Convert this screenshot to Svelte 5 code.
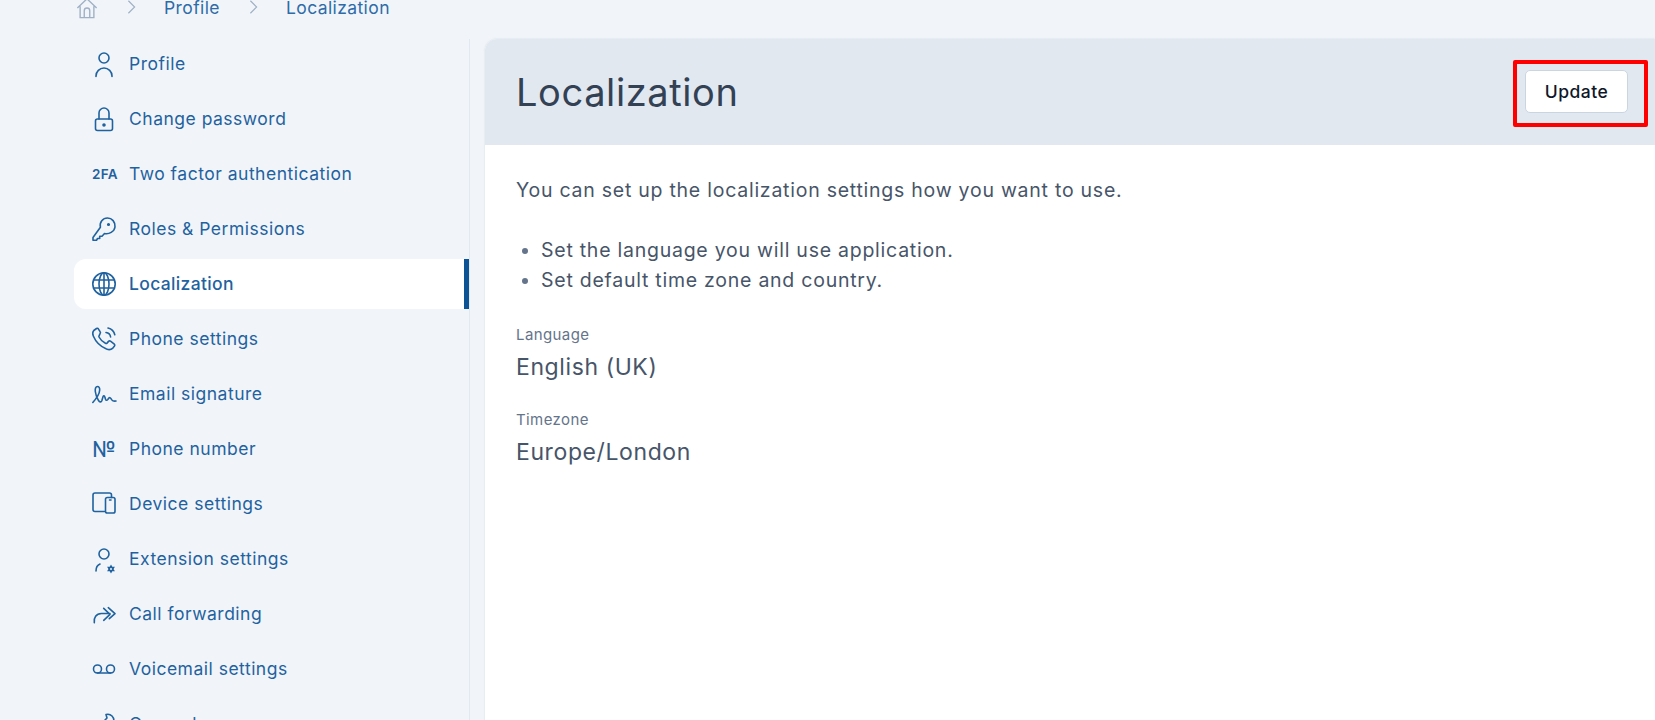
<script lang="ts">
	const items = [
		{ label: 'Profile', svg: '<circle cx="12" cy="6" r="5"/><path d="M4 24.500V24a8 8 0 0 1 16 0v.5"/>' },
		{ label: 'Change password', svg: '<rect x="3.500" y="12" width="17" height="11.500" rx="2"/><path d="M7 12V6a5 5 0 0 1 10 0v6"/><circle cx="12" cy="18" r="1" fill="currentColor"/>' },
		{ label: 'Two factor authentication', text: '2FA', cls: 'tfa' },
		{ label: 'Roles & Permissions', svg: '<path d="M1 20.500v2.800h3.500l1-1.800h2.200v-2.300H10l2.500-2.700c4.400 1 9.900-1.700 10.500-6.500C23.500 5 20 1 15.500 1 10.800 1 7.300 5.200 8.400 10.200z"/><circle cx="16.500" cy="7.500" r=".8" fill="currentColor"/>' },
		{ label: 'Localization', svg: '<circle cx="12" cy="12" r="11.200"/><ellipse cx="12" cy="12" rx="5" ry="11.200"/><path d="M12 .8v22.400M1.500 8h21M1.500 16h21"/>' },
		{ label: 'Phone settings', svg: '<path d="M4.500 1.500 1.800 3.500C.5 5 .5 7 1.300 9c2.500 6 7 10.500 13.200 13 2.200.8 4.500.8 6-.6l2-2.300c.5-.7.400-1.400-.2-1.900l-3.800-3c-.7-.5-1.400-.4-2 .2l-1.500 1.700c-.5.500-1 .5-1.600.2-2.800-1.400-5-3.600-6.400-6.300-.3-.6-.2-1.100.3-1.600L8 6.700c.6-.6.600-1.300.1-2L6.300 1.800c-.5-.7-1.100-.8-1.800-.3zM14 5.500c2.500.3 4.300 2 4.600 4.500M16 1c3.500.8 6 3.300 6.800 6.800"/>' },
		{ label: 'Email signature', svg: '<path d="M.8 20.500c2.500-2.800 6.700-8.500 6.900-12.500.1-2.300-.9-3.500-2.200-3.500C3.700 4.500 3 6.500 3.300 9.500c.4 3.500 1.700 6.700 3.200 9 1 1.500 2.700 2 3.300.2l1.200-4c.5-1.300 1.500-1.200 1.800 0l.7 2.500c.5 1.500 1.500 1.300 2.300.3l.9-1.200c.7-.9 1.500-.8 2.100.1l1 1.500c.8 1.100 2 1.400 4.200 1.100"/>' },
		{ label: 'Phone number', text: '№', cls: 'no' },
		{ label: 'Device settings', svg: '<path d="M12.500 19.500H3a2 2 0 0 1-2-2V3a2 2 0 0 1 2-2h14.500a2 2 0 0 1 2 2v2.500"/><rect x="13.500" y="5.500" width="9.500" height="15.500" rx="1.800"/><path d="M17.500 8h1.500"/>' },
		{ label: 'Extension settings', svg: '<circle cx="12" cy="7" r="5"/><path d="M4 24c0-3.500 1.500-6 4-7"/><path d="M19 17.500l3.900 6.750h-7.800zM19 26.500l-3.900-6.750h7.800z" fill="currentColor" stroke="none"/><circle cx="19" cy="22" r="1" fill="#f1f5f9" stroke="none"/>' },
		{ label: 'Call forwarding', svg: '<path d="M2.300 20.700c-.8-5 2-9 7-9.200h8.700M11.700 6.300 18 12.300l-6.300 6M16.300 5.700 23 11.700l-5.700 5"/>' },
		{ label: 'Voicemail settings', svg: '<circle cx="5.500" cy="12" r="4"/><circle cx="18.500" cy="12" r="4"/><path d="M5.500 16h13"/>' },
		{ label: 'General', svg: '<path d="M2 22l9-9M14 2.500a6 6 0 0 1 7.500 7.500l-3.500-1-2 2-3-3 2-2z"/>' }
	];
</script>

<div class="page">
	<nav class="crumbs">
		<svg class="home" viewBox="0 0 24 24" aria-hidden="true"><path d="M1.500 12 12 2l10.500 10M4.500 10v12.500h15V10M9 22.500V15a3 3 0 0 1 6 0v7.500"/></svg>
		<svg class="chev" viewBox="0 0 10 18" aria-hidden="true"><path d="M1.500 2 8.500 9l-7 7"/></svg>
		<span>Profile</span>
		<svg class="chev" viewBox="0 0 10 18" aria-hidden="true"><path d="M1.500 2 8.500 9l-7 7"/></svg>
		<span>Localization</span>
	</nav>

	<div class="columns">
		<ul class="side">
			{#each items as item}
				<li class:active={item.label === 'Localization'}>
					{#if item.text}
						<span class="ico-text {item.cls}">{item.text}</span>
					{:else}
						<svg class="ico" viewBox="0 0 24 24" aria-hidden="true">{@html item.svg}</svg>
					{/if}
					<span class="label">{item.label}</span>
				</li>
			{/each}
		</ul>

		<section class="card">
			<header>
				<h1>Localization</h1>
				<div class="mark"><button>Update</button></div>
			</header>
			<div class="body">
				<p>You can set up the localization settings how you want to use.</p>
				<ul class="points">
					<li>Set the language you will use application.</li>
					<li>Set default time zone and country.</li>
				</ul>
				<dl>
					<dt>Language</dt>
					<dd>English (UK)</dd>
					<dt>Timezone</dt>
					<dd>Europe/London</dd>
				</dl>
			</div>
		</section>
	</div>
</div>

<style>
	:global(body) {
		background: #f1f5f9;
		font-family: Inter, 'Noto Sans', sans-serif;
	}

	.page {
		height: 720px;
		overflow: hidden;
		background: #f1f5f9;
	}

	.crumbs {
		display: flex;
		align-items: center;
		height: 30px;
		margin-top: -8px;
		margin-bottom: 17px;
		padding-left: 76px;
		color: #2f6ba8;
		font-size: 17.500px;
		letter-spacing: 0.4px;
	}

	.home {
		width: 22px;
		height: 22px;
		fill: none;
		stroke: #9fb0c6;
		stroke-width: 1.500;
		margin-top: 2px;
	}

	.chev {
		width: 9px;
		height: 16px;
		fill: none;
		stroke: #9fb0c6;
		stroke-width: 1.300;
		margin: 0 28px 0 29px;
	}

	.columns {
		display: flex;
		padding-left: 74px;
		gap: 15px;
	}

	.side {
		list-style: none;
		margin: 0;
		padding: 0;
		width: 395px;
		flex: none;
		border-right: 1px solid #e2e8f0;
		display: flex;
		flex-direction: column;
		gap: 5px;
		height: 720px;
	}

	.side li {
		display: flex;
		align-items: center;
		flex: none;
		gap: 13px;
		height: 50px;
		padding-left: 18px;
		color: #1f629f;
		font-size: 17.500px;
		letter-spacing: 0.5px;
		border-radius: 12px 0 0 12px;
	}

	.label {
		margin-bottom: 2px;
	}

	.side li.active {
		background: #fff;
		border-right: 5px solid #0b5394;
		font-weight: 500;
		letter-spacing: 0.35px;
	}

	.ico {
		width: 24px;
		height: 24px;
		flex: none;
		fill: none;
		stroke: currentColor;
		stroke-width: 1.600;
		stroke-linecap: round;
		stroke-linejoin: round;
		overflow: visible;
	}

	.ico-text {
		width: 24px;
		flex: none;
		text-align: center;
		white-space: nowrap;
	}

	.tfa {
		font-size: 13.500px;
		font-weight: 600;
		letter-spacing: 0.3px;
	}

	.no {
		font-size: 22px;
		letter-spacing: 0;
	}

	.card {
		flex: 1;
		min-width: 0;
		height: 700px;
		background: #fff;
		border-radius: 12px 0 0 0;
		overflow: hidden;
		box-shadow: 0 0 2px rgba(148, 163, 184, 0.35);
	}

	header {
		display: flex;
		align-items: flex-start;
		justify-content: space-between;
		height: 106px;
		box-sizing: border-box;
		padding: 21px 7px 0 31px;
		background: #e2e8f0;
	}

	h1 {
		margin: 0;
		padding-top: 9px;
		color: #334155;
		font-size: 38px;
		line-height: 46px;
		font-weight: 400;
		letter-spacing: 0.6px;
	}

	.mark {
		border: 4px solid #fe0000;
		border-radius: 2px;
		padding: 6px 16px 10px 8px;
	}

	button {
		display: block;
		width: 103px;
		height: 43px;
		padding: 0;
		background: #fff;
		border: 1px solid #cbd5e1;
		border-radius: 5px;
		color: #0f172a;
		font: 500 17.500px Inter, sans-serif;
		letter-spacing: 0.5px;
	}

	.body {
		padding: 32px 31px 0;
		color: #475569;
		font-size: 19.500px;
		letter-spacing: 0.75px;
	}

	p {
		margin: 0;
		line-height: 26px;
	}

	.points {
		margin: 32px 0 0;
		padding-left: 25px;
		line-height: 30px;
	}

	.points li::marker {
		color: #64748b;
	}

	dl {
		margin: 30px 0 0;
	}

	dt {
		color: #64748b;
		font-size: 15px;
		line-height: 20px;
		letter-spacing: 0.4px;
	}

	dd {
		margin: 7px 0 28px;
		font-size: 23px;
		line-height: 30px;
		letter-spacing: 0.6px;
	}
</style>
